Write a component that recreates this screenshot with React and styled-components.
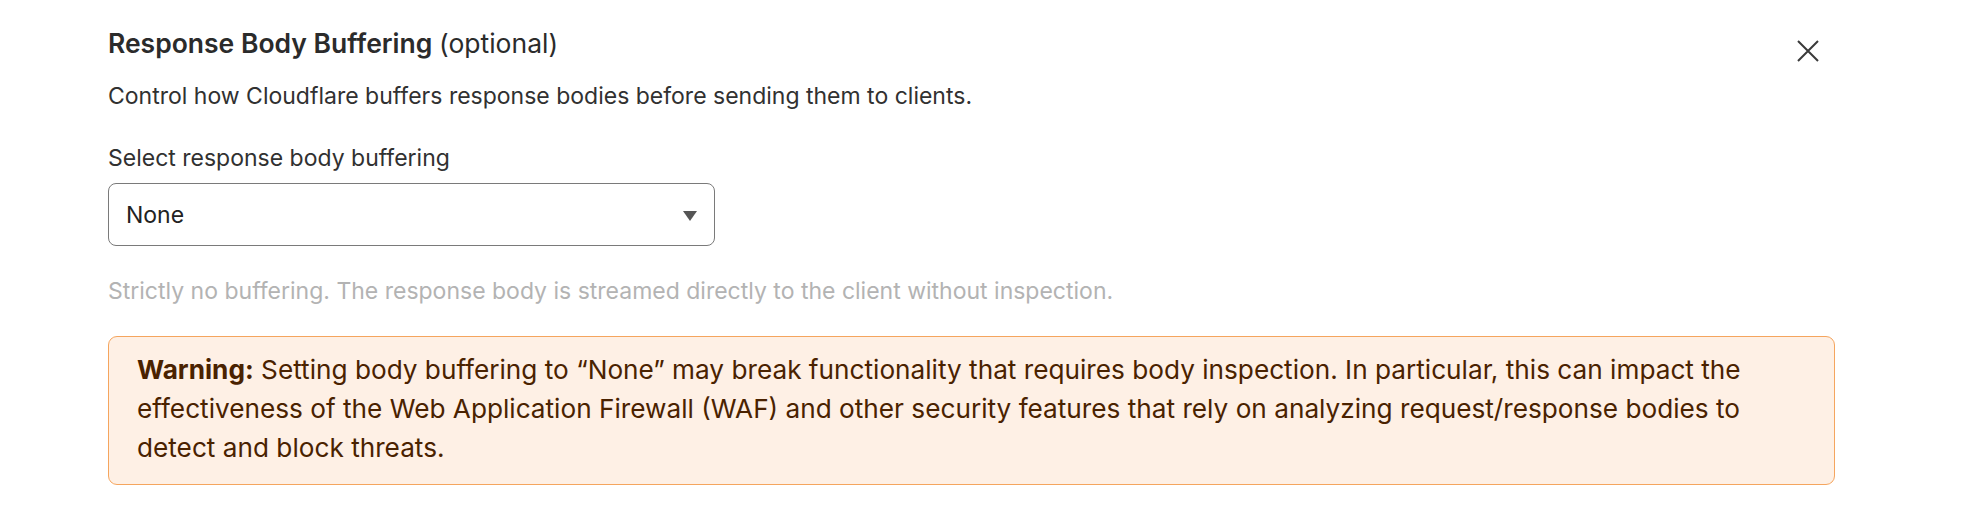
import { useState } from 'react'
import styled, { createGlobalStyle } from 'styled-components'

const GlobalStyle = createGlobalStyle`
  body {
    margin: 0;
    background: #ffffff;
    font-family: Inter, "Noto Sans", sans-serif;
    color: #313131;
  }
`

const Panel = styled.section`
  padding: 24px 126px 0 108px;
`

const Header = styled.div`
  display: flex;
  justify-content: space-between;
  align-items: flex-start;
`

const Title = styled.h2`
  margin: 0;
  font-size: 26.5px;
  line-height: 38px;
  font-weight: 600;
  color: #2b2b2b;
`

const Optional = styled.span`
  font-weight: 400;
`

const CloseButton = styled.button`
  background: transparent;
  border: none;
  padding: 0;
  margin: 16px 16px 0 0;
  width: 22px;
  height: 22px;
  cursor: pointer;
  color: #3a3a3a;
  display: flex;
`

const Description = styled.p`
  margin: 18px 0 0;
  font-size: 23px;
  line-height: 32px;
`

const Field = styled.div`
  margin-top: 30px;
  display: flex;
  flex-direction: column;
`

const Label = styled.label`
  font-size: 23px;
  line-height: 32px;
  color: #313131;
`

const SelectBox = styled.div`
  margin-top: 9px;
  width: 607px;
  height: 63px;
  box-sizing: border-box;
  border: 1px solid #7a7a7a;
  border-radius: 8px;
  display: flex;
  align-items: center;
  justify-content: space-between;
  padding: 0 17px;
  font-size: 23px;
  line-height: 32px;
  color: #222;
`

const Arrow = styled.span`
  width: 0;
  height: 0;
  margin-top: 2px;
  border-left: 7.5px solid transparent;
  border-right: 7.5px solid transparent;
  border-top: 10px solid #555;
`

const Helper = styled.p`
  margin: 29px 0 0;
  font-size: 23px;
  line-height: 32px;
  color: #b3b3b3;
`

const Warning = styled.div`
  margin-top: 29px;
  box-sizing: border-box;
  background: #fef0e5;
  border: 1px solid #f5a55e;
  border-radius: 9px;
  padding: 13px 60px 17px 28px;
  font-size: 26.2px;
  line-height: 39px;
  color: #4a2200;
`

const options = ['None', 'Standard', 'Full']

export default function App() {
  const [value] = useState(options[0])
  return (
    <>
      <GlobalStyle />
      <Panel>
        <Header>
          <Title>
            Response Body Buffering <Optional>(optional)</Optional>
          </Title>
          <CloseButton aria-label="Close">
            <svg width="22" height="22" viewBox="0 0 22 22" fill="none" stroke="currentColor" strokeWidth="2">
              <path d="M1 1 L21 21 M21 1 L1 21" />
            </svg>
          </CloseButton>
        </Header>
        <Description>
          Control how Cloudflare buffers response bodies before sending them to clients.
        </Description>
        <Field>
          <Label>Select response body buffering</Label>
          <SelectBox role="combobox">
            <span>{value}</span>
            <Arrow />
          </SelectBox>
          <Helper>
            Strictly no buffering. The response body is streamed directly to the client without inspection.
          </Helper>
        </Field>
        <Warning>
          <strong>Warning:</strong> Setting body buffering to “None” may break functionality that requires body
          inspection. In particular, this can impact the effectiveness of the Web Application Firewall (WAF) and
          other security features that rely on analyzing request/response bodies to detect and block threats.
        </Warning>
      </Panel>
    </>
  )
}
